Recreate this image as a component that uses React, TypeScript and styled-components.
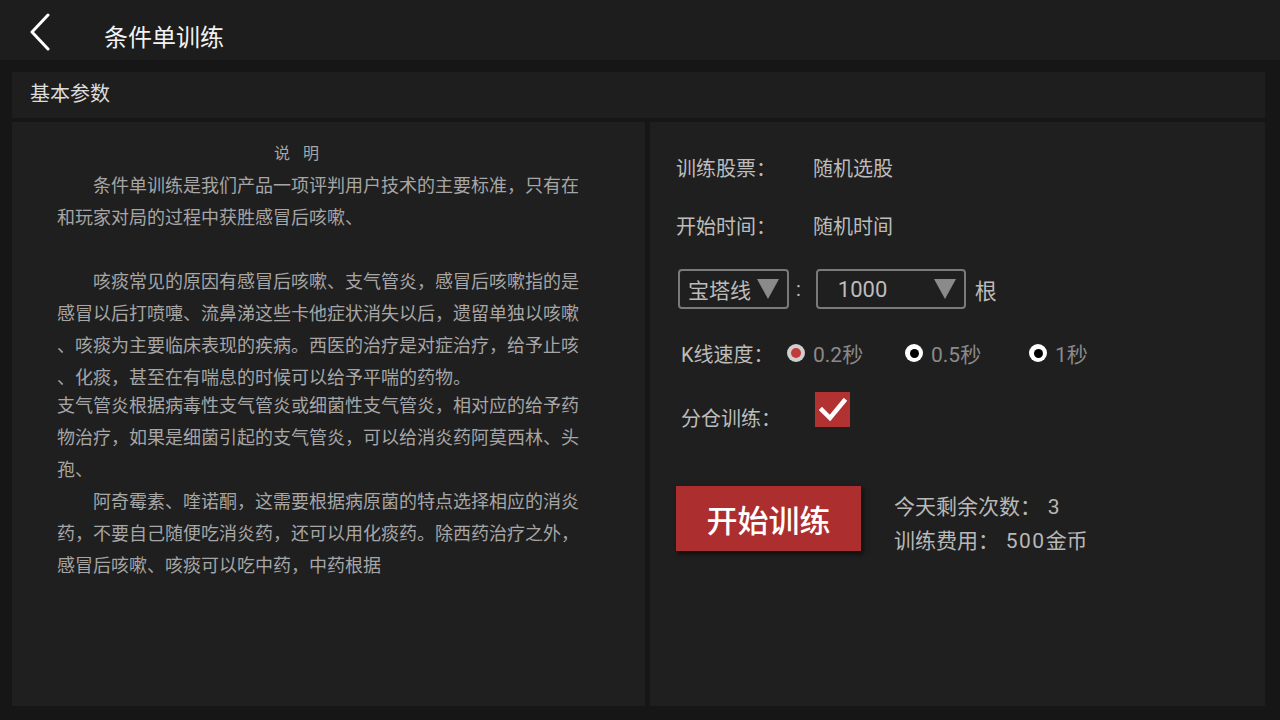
import React from "react";
import styled, { createGlobalStyle } from "styled-components";

const GlobalStyle = createGlobalStyle`
  html, body {
    margin: 0;
    padding: 0;
    background: #161616;
    font-family: Roboto, "Noto Sans CJK SC", sans-serif;
  }
`;

const Page = styled.div`
  width: 1280px;
  height: 720px;
  display: flex;
  flex-direction: column;
  background: #161616;
  overflow: hidden;
`;

const TopBar = styled.header`
  height: 60px;
  box-sizing: border-box;
  padding-top: 10px;
  display: flex;
  align-items: center;
  background: #1d1d1d;
  flex-shrink: 0;
`;

const BackButton = styled.div`
  width: 60px;
  height: 50px;
  display: flex;
  align-items: center;
  justify-content: center;
  margin: -6px 0 0 10px;
`;

const Title = styled.h1`
  margin: 0 0 0 34px;
  font-size: 24px;
  font-weight: 400;
  color: #f2f2f2;
`;

const Body = styled.div`
  flex: 1;
  display: flex;
  flex-direction: column;
  gap: 4px;
  padding: 12px 15px 14px 12px;
  min-height: 0;
`;

const SectionBar = styled.div`
  height: 46px;
  box-sizing: border-box;
  padding: 0 0 6px 18px;
  display: flex;
  align-items: center;
  background: #1e1e1e;
  color: #dcdcdc;
  font-size: 20px;
  flex-shrink: 0;
`;

const Panels = styled.div`
  flex: 1;
  display: flex;
  gap: 5px;
  min-height: 0;
`;

const Panel = styled.section<{ $width?: number }>`
  background: #1f1f1f;
  ${(p) => (p.$width ? `width: ${p.$width}px;` : "flex: 1;")}
`;

const Notes = styled(Panel)`
  padding: 20px 0 0 45px;
  box-sizing: border-box;
  color: #a6a6a6;
  font-size: 18px;
`;

const NotesTitle = styled.div`
  padding-left: 217px;
  font-size: 16px;
  line-height: 24px;
  letter-spacing: 13px;
  margin-bottom: 4px;
`;

const Line = styled.div<{ $indent?: boolean; $gapTop?: number }>`
  white-space: nowrap;
  line-height: 32px;
  height: 32px;
  padding-left: ${(p) => (p.$indent ? "36px" : "0")};
  margin-top: ${(p) => p.$gapTop ?? 0}px;
`;

const Settings = styled(Panel)`
  padding: 22px 0 0 26px;
  box-sizing: border-box;
  display: flex;
  flex-direction: column;
  color: #bcbcbc;
  font-size: 20px;
`;

const Row = styled.div<{ $height: number; $inset?: number }>`
  height: ${(p) => p.$height}px;
  display: flex;
  align-items: center;
  padding-left: ${(p) => p.$inset ?? 0}px;
`;

const Label = styled.span<{ $width?: number }>`
  width: ${(p) => p.$width ?? 137}px;
  flex-shrink: 0;
`;

const Select = styled.div<{ $width: number }>`
  width: ${(p) => p.$width}px;
  height: 40px;
  box-sizing: border-box;
  border: 2px solid #7a7a7a;
  border-radius: 4px;
  display: flex;
  align-items: center;
  justify-content: space-between;
  padding: 0 8px 0 8px;
  color: #bcbcbc;
  font-size: 21px;
`;

const SelectValue = styled.span<{ $offset?: number }>`
  margin-left: ${(p) => p.$offset ?? 0}px;
  font-size: 22px;
`;

const Arrow = styled.span`
  width: 0;
  height: 0;
  border-left: 11px solid transparent;
  border-right: 11px solid transparent;
  border-top: 20px solid #8a8a8a;
`;

const Colon = styled.span`
  margin: 0 15px 0 7px;
`;

const Unit = styled.span`
  margin-left: 9px;
  font-size: 22px;
`;

const Radio = styled.span<{ $checked?: boolean }>`
  width: 18px;
  height: 18px;
  border-radius: 50%;
  box-sizing: border-box;
  display: inline-flex;
  align-items: center;
  justify-content: center;
  background: ${(p) => (p.$checked ? "#cfcfcf" : "#ffffff")};
  margin-right: 8px;
  &::after {
    content: "";
    width: ${(p) => (p.$checked ? 10 : 9)}px;
    height: ${(p) => (p.$checked ? 10 : 9)}px;
    border-radius: 50%;
    background: ${(p) => (p.$checked ? "#c23a3a" : "#000000")};
  }
`;

const Option = styled.label<{ $width: number }>`
  width: ${(p) => p.$width}px;
  display: flex;
  align-items: center;
  color: #8a8a8a;
  font-size: 21px;
`;

const CheckBox = styled.span`
  width: 35px;
  height: 35px;
  background: #b23131;
  display: flex;
  align-items: center;
  justify-content: center;
  margin-top: -15px;
`;

const ActionRow = styled.div`
  display: flex;
  align-items: center;
  margin-top: 32px;
`;

const StartButton = styled.button`
  width: 185px;
  height: 65px;
  border: none;
  background: #ad2e2e;
  color: #ffffff;
  font-family: inherit;
  font-size: 31px;
  font-weight: 500;
  box-shadow: 2px 3px 5px rgba(0, 0, 0, 0.6);
  cursor: pointer;
`;

const Info = styled.div`
  margin-left: 33px;
  padding-top: 12px;
  color: #b8b8b8;
  font-size: 21px;
  line-height: 34px;
  white-space: pre;
`;

const Digits = styled.span`
  letter-spacing: 1.5px;
`;

const notes: { text: string; indent?: boolean; gapTop?: number }[] = [
  { text: "条件单训练是我们产品一项评判用户技术的主要标准，只有在", indent: true },
  { text: "和玩家对局的过程中获胜感冒后咳嗽、" },
  { text: "" },
  { text: "咳痰常见的原因有感冒后咳嗽、支气管炎，感冒后咳嗽指的是", indent: true },
  { text: "感冒以后打喷嚏、流鼻涕这些卡他症状消失以后，遗留单独以咳嗽" },
  { text: "、咳痰为主要临床表现的疾病。西医的治疗是对症治疗，给予止咳" },
  { text: "、化痰，甚至在有喘息的时候可以给予平喘的药物。" },
  { text: "支气管炎根据病毒性支气管炎或细菌性支气管炎，相对应的给予药", gapTop: -4 },
  { text: "物治疗，如果是细菌引起的支气管炎，可以给消炎药阿莫西林、头" },
  { text: "孢、" },
  { text: "阿奇霉素、喹诺酮，这需要根据病原菌的特点选择相应的消炎", indent: true },
  { text: "药，不要自己随便吃消炎药，还可以用化痰药。除西药治疗之外，" },
  { text: "感冒后咳嗽、咳痰可以吃中药，中药根据" },
];

export default function App() {
  return (
    <Page>
      <GlobalStyle />
      <TopBar>
        <BackButton>
          <svg width="24" height="38" viewBox="0 0 24 38">
            <polyline points="20,2 4,19 20,36" fill="none" stroke="#ffffff" strokeWidth="3" strokeLinecap="round" strokeLinejoin="round" />
          </svg>
        </BackButton>
        <Title>条件单训练</Title>
      </TopBar>
      <Body>
        <SectionBar>基本参数</SectionBar>
        <Panels>
          <Notes $width={633}>
            <NotesTitle>说明</NotesTitle>
            {notes.map((n, i) => (
              <Line key={i} $indent={n.indent} $gapTop={n.gapTop}>
                {n.text}
              </Line>
            ))}
          </Notes>
          <Settings>
            <Row $height={46}>
              <Label>训练股票：</Label>
              <span>随机选股</span>
            </Row>
            <Row $height={70}>
              <Label>开始时间：</Label>
              <span>随机时间</span>
            </Row>
            <Row $height={58} $inset={2}>
              <Select $width={111}>
                宝塔线
                <Arrow />
              </Select>
              <Colon>:</Colon>
              <Select $width={150}>
                <SelectValue $offset={12}>1000</SelectValue>
                <Arrow />
              </Select>
              <Unit>根</Unit>
            </Row>
            <Row $height={70} $inset={5}>
              <Label $width={106}>K线速度：</Label>
              <Option $width={118}>
                <Radio $checked />
                0.2秒
              </Option>
              <Option $width={124}>
                <Radio />
                0.5秒
              </Option>
              <Option $width={80}>
                <Radio />
                1秒
              </Option>
            </Row>
            <Row $height={58} $inset={5}>
              <Label $width={134}>分仓训练：</Label>
              <CheckBox>
                <svg width="28" height="24" viewBox="0 0 28 24">
                  <polyline points="3,12 11,20 25,3" fill="none" stroke="#ffffff" strokeWidth="4.5" strokeLinecap="square" />
                </svg>
              </CheckBox>
            </Row>
            <ActionRow>
              <StartButton>开始训练</StartButton>
              <Info>
                <div>
                  今天剩余次数：<Digits> 3</Digits>
                </div>
                <div>
                  训练费用：<Digits> 500</Digits>金币
                </div>
              </Info>
            </ActionRow>
          </Settings>
        </Panels>
      </Body>
    </Page>
  );
}
